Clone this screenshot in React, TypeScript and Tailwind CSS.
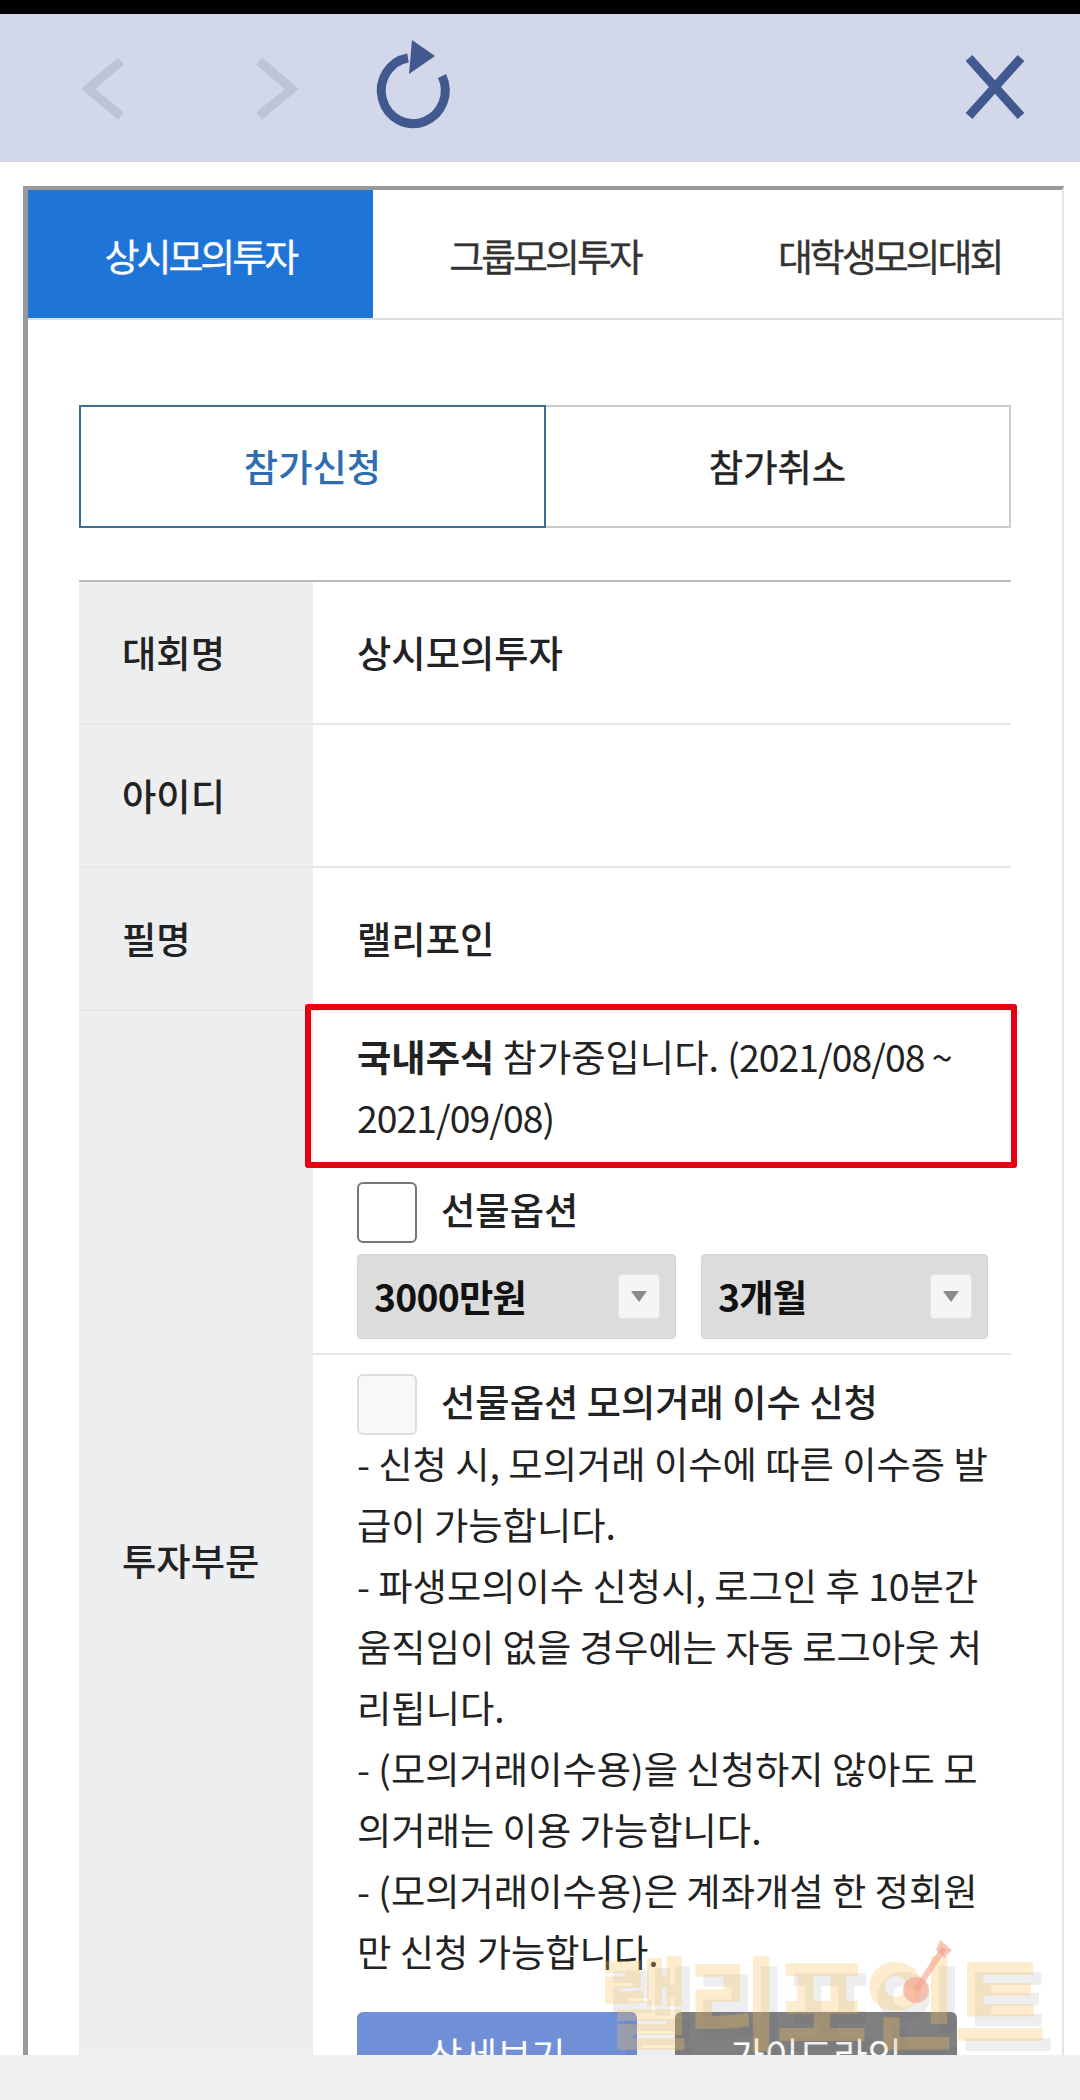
import React from "react";

const FONT = "font-['Noto_Sans_CJK_KR','Noto_Sans',sans-serif]";

const Toolbar = () => (
  <div className="h-[162px] border-t-[14px] border-black bg-[#d2d7ea] flex items-center shrink-0">
    <svg width="1080" height="148" viewBox="0 14 1080 148" fill="none">
      {/* back / forward / reload / close */}
      <path d="M121 61 L88 89 L121 116" stroke="#bec4d6" strokeWidth="9" />
      <path d="M259 61 L292 89 L259 116" stroke="#bec4d6" strokeWidth="9" />
      <path d="M408 58 A32 33 0 1 0 442 76" stroke="#42598f" strokeWidth="9" />
      <path d="M412 40 L435 56 L409 74 Z" fill="#42598f" />
      <path d="M969 58 L1021 116 M1021 58 L969 116" stroke="#42598f" strokeWidth="9" />
    </svg>
  </div>
);

const Tabs = () => (
  <div className="grid grid-cols-3 h-[130px] border-b-2 border-[#dedede] text-[38px] tracking-[-0.08em] text-[#333] [-webkit-text-stroke:0.3px_currentColor]">
    <div className="bg-[#1f74d8] text-white flex items-center justify-center">상시모의투자</div>
    <div className="flex items-center justify-center">그룹모의투자</div>
    <div className="flex items-center justify-center">대학생모의대회</div>
  </div>
);

const SubTabs = () => (
  <div className="flex h-[123px] text-[37.3px]">
    <div className="w-[467px] border-2 border-[#3d6f94] text-[#2e6db0] font-medium flex items-center justify-center">참가신청</div>
    <div className="flex-1 border-2 border-l-0 border-[#cccccc] text-[#222] [-webkit-text-stroke:0.5px_currentColor] flex items-center justify-center">참가취소</div>
  </div>
);

const Row = ({ label, value }: { label: string; value?: string }) => (
  <div className="flex h-[143px] border-b-2 border-[#e6e7e9]">
    <div className="w-[234px] shrink-0 bg-[#edeef0] pl-[43px] flex items-center font-medium text-[#222]">{label}</div>
    <div className="flex-1 pl-[44px] flex items-center font-medium text-[#222]">{value}</div>
  </div>
);

const Select = ({ text, width }: { text: string; width: string }) => (
  <div className={`${width} h-[85px] rounded bg-[#dcdcdc] border border-[#d2d2d2] flex items-center justify-between pl-4 pr-[15px] font-bold text-[#111] tracking-[-0.02em]`}>
    <span>{text}</span>
    <span className="w-[42px] h-[45px] rounded bg-[#f5f5f5] border border-[#e4e4e4] flex items-center justify-center">
      <svg width="16" height="11" viewBox="0 0 16 11">
        <path d="M0 0 H16 L8 11 Z" fill="#8b8b8b" />
      </svg>
    </span>
  </div>
);

const Invest = () => (
  <div className="flex border-b-2 border-[#e6e7e9]">
    <div className="w-[234px] shrink-0 bg-[#edeef0] pl-[43px] flex items-center font-medium text-[#222] pb-[6px]">투자부문</div>
    <div className="flex-1 min-w-0">
      <div className="pl-[44px] pr-[20px] pt-[15px] h-[344px] border-b-2 border-[#e6e7e9]">
        <p className="leading-[61px] text-[#222]">
          <b className="font-bold">국내주식</b> 참가중입니다. <span className="tracking-[-0.025em]">(2021/08/08 ~ 2021/09/08)</span>
        </p>
        <div className="flex items-start gap-[24px] mt-[34px]">
          <span className="w-[60px] h-[61px] rounded-md border-2 border-[#777] bg-white" />
          <span className="font-medium leading-[54px] text-[#222]">선물옵션</span>
        </div>
        <div className="flex gap-[25px] mt-[11px]">
          <Select text="3000만원" width="w-[319px]" />
          <Select text="3개월" width="w-[287px]" />
        </div>
      </div>
      <div className="pl-[44px] pr-[20px] pt-[19px] pb-[18px]">
        <div className="flex items-start gap-[24px] h-[59px]">
          <span className="w-[60px] h-[61px] rounded-md border-2 border-[#dddddd] bg-[#f8f8f8] shrink-0" />
          <span className="font-medium leading-[54px] text-[#222]">선물옵션 모의거래 이수 신청</span>
        </div>
        <p className="leading-[61px] text-[#222]">
          - 신청 시, 모의거래 이수에 따른 이수증 발급이 가능합니다.
          <br />- 파생모의이수 신청시, 로그인 후 10분간 움직임이 없을 경우에는 자동 로그아웃 처리됩니다.
          <br />- (모의거래이수용)을 신청하지 않아도 모의거래는 이용 가능합니다.
          <br />- (모의거래이수용)은 계좌개설 한 정회원만 신청 가능합니다.
        </p>
        <div className="flex gap-[38px] mt-[30px] text-white">
          <div className="w-[280px] h-[86px] rounded-md bg-[#6f8fd6] flex items-center justify-center">상세보기</div>
          <div className="w-[282px] h-[86px] rounded-md bg-[#808080] flex items-center justify-center">가이드라인</div>
        </div>
      </div>
    </div>
  </div>
);

export default function App() {
  return (
    <div className={`${FONT} relative h-[2100px] w-[1080px] overflow-hidden bg-white text-[37.3px]`}>
      <Toolbar />
      <div className="ml-[23px] mt-6 w-[1041px] border-l-[5px] border-t-[4px] border-r-2 border-l-[#999] border-t-[#999] border-r-[#e4e4e4]">
        <Tabs />
        <div className="pl-[51px] pr-[51px] pt-[85px]">
          <SubTabs />
          <div className="mt-[52px] border-t-2 border-[#bbbbbb]">
            <Row label="대회명" value="상시모의투자" />
            <Row label="아이디" />
            <Row label="필명" value="랠리포인" />
            <Invest />
          </div>
        </div>
      </div>

      {/* annotation box */}
      <div className="absolute left-[305px] top-[1004px] w-[712px] h-[164px] border-[6px] border-[#e60012] rounded-[3px]" />

      {/* watermark */}
      <div className="absolute left-[598px] top-[1928px] w-[480px] text-[100px] leading-[140px] font-black tracking-[-3px] text-[#f7c25c]/30 [text-shadow:8px_10px_0_rgba(90,90,110,0.1)] whitespace-nowrap">
        랠리포인트
      </div>
      <svg className="absolute left-[890px] top-[1938px]" width="70" height="80" viewBox="0 0 70 80" fill="none">
        <circle cx="26" cy="52" r="13" fill="#f5a08a" fillOpacity="0.6" />
        <path d="M26 52 L54 10" stroke="#f5a08a" strokeOpacity="0.6" strokeWidth="6" />
        <path d="M50 2 L62 12 L54 20 L46 12 Z" fill="#f5a08a" fillOpacity="0.6" />
      </svg>

      {/* bottom bar */}
      <div className="absolute left-0 right-0 bottom-0 h-[45px] bg-[#f0f0f1]" />
    </div>
  );
}
